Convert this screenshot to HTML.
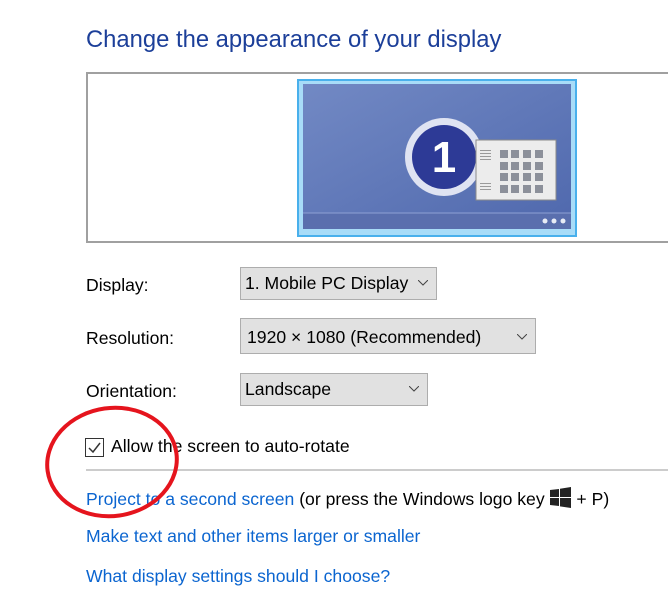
<!DOCTYPE html>
<html><head><meta charset="utf-8"><style>
body{margin:0;width:668px;height:609px;overflow:hidden;background:#fff;font-family:"Liberation Sans",sans-serif;position:relative;color:#000}
.a{position:absolute;white-space:nowrap}
.t{font-size:17.6px}
.dd{position:absolute;background:#e1e1e1;border:1px solid #adadad;box-sizing:border-box;font-size:17.6px;padding-left:4px;line-height:30px}
.dd svg{position:absolute;right:8px;top:12px}
.l{color:#0b65d0}
</style></head><body>
<div class="a" style="left:86px;top:26px;font-size:23.8px;color:#1c3f99">Change the appearance of your display</div>
<div class="a" style="left:86px;top:72px;width:600px;height:171px;border:2px solid #a0a0a0;box-sizing:border-box"></div>
<svg class="a" style="left:297px;top:79px" width="280" height="158" viewBox="0 0 280 158">
<defs><linearGradient id="g" x1="0" y1="0" x2="1" y2="1"><stop offset="0" stop-color="#7289c4"/><stop offset="1" stop-color="#4f68ad"/></linearGradient></defs>
<rect x="0" y="0" width="280" height="158" fill="#49b0ec"/>
<rect x="2" y="2" width="276" height="154" fill="#a8dcf8"/>
<rect x="6" y="5" width="268" height="145" fill="url(#g)"/>
<rect x="6" y="134" width="268" height="16" fill="#5a6fae"/>
<line x1="6" y1="134" x2="274" y2="134" stroke="#8ea0d4"/>
<circle cx="248" cy="142" r="2.5" fill="#e8ecf6"/><circle cx="257" cy="142" r="2.5" fill="#e8ecf6"/><circle cx="266" cy="142" r="2.5" fill="#e8ecf6"/>
<circle cx="147" cy="78" r="39" fill="#dfe3f2"/>
<circle cx="147" cy="78" r="32" fill="#2d3a96"/>
<text x="147" y="93" text-anchor="middle" font-family="Liberation Sans" font-weight="bold" font-size="44" fill="#fff">1</text>
<rect x="179" y="61" width="80" height="60" fill="#ececec" stroke="#8a8a8a"/>
<g fill="#9a9a9a"><rect x="183" y="71" width="11" height="1"/><rect x="183" y="74" width="11" height="1"/><rect x="183" y="77" width="11" height="1"/><rect x="183" y="80" width="11" height="1"/><rect x="183" y="104" width="11" height="1"/><rect x="183" y="107" width="11" height="1"/><rect x="183" y="110" width="11" height="1"/></g>
<g fill="#8c909a">
<rect x="203" y="71" width="8" height="8"/><rect x="214" y="71" width="8" height="8"/><rect x="226" y="71" width="8" height="8"/><rect x="238" y="71" width="8" height="8"/>
<rect x="203" y="83" width="8" height="8"/><rect x="214" y="83" width="8" height="8"/><rect x="226" y="83" width="8" height="8"/><rect x="238" y="83" width="8" height="8"/>
<rect x="203" y="94" width="8" height="8"/><rect x="214" y="94" width="8" height="8"/><rect x="226" y="94" width="8" height="8"/><rect x="238" y="94" width="8" height="8"/>
<rect x="203" y="106" width="8" height="8"/><rect x="214" y="106" width="8" height="8"/><rect x="226" y="106" width="8" height="8"/><rect x="238" y="106" width="8" height="8"/>
</g>
</svg>
<div class="a t" style="left:86px;top:275px">Display:</div>
<div class="dd" style="left:240px;top:267px;width:197px;height:33px">1. Mobile PC Display<svg width="10" height="6"><path d="M0 0L5 5L10 0" fill="none" stroke="#444"/></svg></div>
<div class="a t" style="left:86px;top:328px">Resolution:</div>
<div class="dd" style="left:240px;top:318px;width:296px;height:36px;line-height:36px;padding-left:6px">1920 × 1080 (Recommended)<svg width="10" height="6" style="top:15px"><path d="M0 0L5 5L10 0" fill="none" stroke="#444"/></svg></div>
<div class="a t" style="left:86px;top:381px">Orientation:</div>
<div class="dd" style="left:240px;top:373px;width:188px;height:33px">Landscape<svg width="10" height="6"><path d="M0 0L5 5L10 0" fill="none" stroke="#444"/></svg></div>
<div class="a" style="left:85px;top:438px;width:19px;height:19px;border:1px solid #333;box-sizing:border-box;background:#fff"></div>
<svg class="a" style="left:85px;top:438px" width="19" height="19"><path d="M4 10L8 14L15 5" fill="none" stroke="#333" stroke-width="1.5"/></svg>
<div class="a t" style="left:111px;top:436px">Allow the screen to auto-rotate</div>
<div class="a" style="left:86px;top:469px;width:582px;height:2px;background:#ccc"></div>
<div class="a t" style="left:86px;top:487px"><span class="l">Project to a second screen</span> (or press the Windows logo key <svg width="22" height="22" style="vertical-align:-4px"><path d="M0 3L9 2V10H0ZM10 1.8L21 0V10H10ZM0 11H9V19L0 18ZM10 11H21V21L10 19.4Z" fill="#222"/></svg> + P)</div>
<div class="a t l" style="left:86px;top:526px">Make text and other items larger or smaller</div>
<div class="a t l" style="left:86px;top:566px">What display settings should I choose?</div>
<svg class="a" style="left:0;top:0" width="668" height="609"><ellipse cx="112" cy="462" rx="65" ry="54" fill="none" stroke="#e5141d" stroke-width="4" transform="rotate(-8 112 462)"/></svg>
</body></html>
